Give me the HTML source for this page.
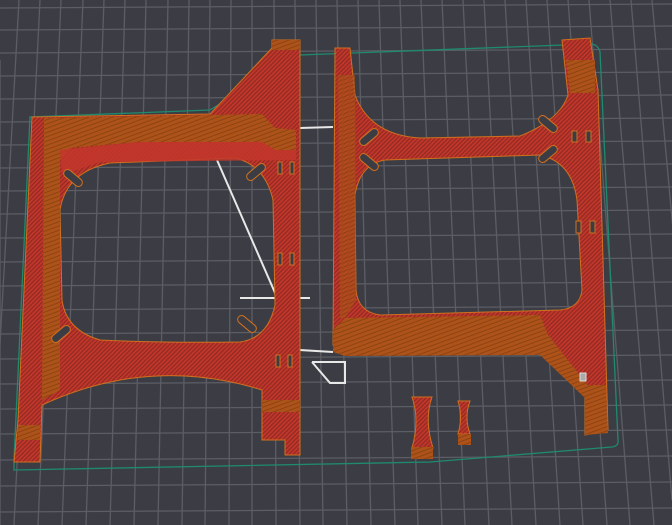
<!DOCTYPE html>
<html><head><style>
html,body{margin:0;padding:0;background:#3b3c43;overflow:hidden}
svg{display:block}
</style></head><body>
<svg width="672" height="525" viewBox="0 0 672 525" xmlns="http://www.w3.org/2000/svg">
<defs>
<pattern id="hatch" width="3" height="3" patternUnits="userSpaceOnUse" patternTransform="rotate(45)">
<rect width="3" height="3" fill="#c3362b"/><rect width="1.2" height="3" fill="#8f2a22"/>
</pattern>
<pattern id="wall" width="4" height="4" patternUnits="userSpaceOnUse" patternTransform="rotate(-20)">
<rect width="4" height="4" fill="#ad5319"/><rect width="4" height="1" fill="#8e4313"/>
</pattern>
</defs>
<rect width="672" height="525" fill="#3c3d44"/>
<g stroke="#5c5d65" stroke-width="1.3">
<line x1="40" y1="0" x2="14" y2="525"/><line x1="83" y1="0" x2="62" y2="525"/>
<line x1="125" y1="0" x2="110" y2="525"/><line x1="168" y1="0" x2="158" y2="525"/>
<line x1="210" y1="0" x2="205" y2="525"/><line x1="252" y1="0" x2="252" y2="525"/>
<line x1="295" y1="0" x2="300" y2="525"/><line x1="337" y1="0" x2="347" y2="525"/>
<line x1="379" y1="0" x2="395" y2="525"/><line x1="421" y1="0" x2="442" y2="525"/>
<line x1="463" y1="0" x2="489" y2="525"/><line x1="505" y1="0" x2="536" y2="525"/>
<line x1="547" y1="0" x2="583" y2="525"/><line x1="589" y1="0" x2="630" y2="525"/>
<line x1="631" y1="0" x2="672" y2="500"/><line x1="0" y1="60" x2="0" y2="525"/>
<line x1="19" y1="0" x2="-10" y2="525"/><line x1="61" y1="0" x2="38" y2="525"/>
<line x1="104" y1="0" x2="86" y2="525"/><line x1="146" y1="0" x2="134" y2="525"/>
<line x1="189" y1="0" x2="182" y2="525"/><line x1="231" y1="0" x2="229" y2="525"/>
<line x1="274" y1="0" x2="276" y2="525"/><line x1="316" y1="0" x2="323" y2="525"/>
<line x1="358" y1="0" x2="371" y2="525"/><line x1="400" y1="0" x2="418" y2="525"/>
<line x1="442" y1="0" x2="465" y2="525"/><line x1="484" y1="0" x2="512" y2="525"/>
<line x1="526" y1="0" x2="560" y2="525"/><line x1="568" y1="0" x2="607" y2="525"/>
<line x1="610" y1="0" x2="654" y2="525"/><line x1="652" y1="0" x2="700" y2="525"/>
<line x1="0" y1="8" x2="672" y2="4"/><line x1="0" y1="30" x2="672" y2="26"/>
<line x1="0" y1="53" x2="672" y2="49"/><line x1="0" y1="76" x2="672" y2="72"/>
<line x1="0" y1="99" x2="672" y2="95"/><line x1="0" y1="122" x2="672" y2="118"/>
<line x1="0" y1="145" x2="672" y2="141"/><line x1="0" y1="168" x2="672" y2="164"/>
<line x1="0" y1="191" x2="672" y2="187"/><line x1="0" y1="214" x2="672" y2="210"/>
<line x1="0" y1="238" x2="672" y2="234"/><line x1="0" y1="262" x2="672" y2="258"/>
<line x1="0" y1="286" x2="672" y2="282"/><line x1="0" y1="310" x2="672" y2="306"/>
<line x1="0" y1="334" x2="672" y2="330"/><line x1="0" y1="359" x2="672" y2="355"/>
<line x1="0" y1="384" x2="672" y2="380"/><line x1="0" y1="409" x2="672" y2="405"/>
<line x1="0" y1="434" x2="672" y2="430"/><line x1="0" y1="460" x2="672" y2="456"/>
<line x1="0" y1="486" x2="672" y2="482"/><line x1="0" y1="512" x2="672" y2="508"/>
</g>
<path d="M14,460 L30,117 L210,110 L300,55 L590,44 Q598,44 600,52 L618,440 Q619,446 612,447 L430,462 L14,470 Z" fill="none" stroke="#1f8a6e" stroke-width="1.3"/>
<g stroke="#e8e8e8" stroke-width="2" fill="none">
<polyline points="300,128 333,127"/><polyline points="217,160 300,350 333,352"/>
<polyline points="240,298 310,298"/><polyline points="312,362 345,362 345,383 330,383 312,362"/>
</g>
<!-- LEFT FRAME -->
<path fill-rule="evenodd" fill="url(#hatch)" stroke="#d0701e" stroke-width="1"
d="M32,117 L210,114 L272,48 L272,40 L300,40 L300,455 L285,455 L285,440 L262,440 L262,390 Q150,355 42,405 L40,462 L14,462 L18,420 Z
M110,163 L235,158 Q265,165 273,200 L275,305 Q268,338 240,342 Q160,343 100,340 Q66,330 62,300 L60,210 Q66,172 110,163 Z"/>
<path fill="url(#wall)" d="M44,118 L262,114 L275,128 L296,130 L296,150 L275,150 L262,142 L140,142 L70,148 L60,160 L60,390 L42,400 L44,130 Z"/>
<path fill="#c3362b" d="M60,150 L140,142 L262,142 L275,150 L296,150 L296,160 L100,162 L62,175 Z" opacity=".85"/>
<path fill="url(#wall)" d="M272,40 L300,40 L300,50 L272,50 Z"/>
<g fill="#3c3d44" stroke="#d0701e">
<rect x="62" y="174" width="22" height="8" rx="4" transform="rotate(40 73 178)"/>
<rect x="245" y="168" width="22" height="8" rx="4" transform="rotate(-40 256 172)"/>
<rect x="50" y="330" width="22" height="8" rx="4" transform="rotate(-40 61 334)"/>
<rect x="236" y="320" width="22" height="8" rx="4" transform="rotate(40 247 324)"/>
<rect x="278" y="162" width="4" height="12"/><rect x="290" y="162" width="4" height="12"/>
<rect x="278" y="253" width="4" height="12"/><rect x="290" y="253" width="4" height="12"/>
<rect x="276" y="355" width="4" height="12"/><rect x="288" y="355" width="4" height="12"/>
</g>
<path fill="url(#wall)" d="M262,400 L300,400 L300,412 L262,412 Z M18,425 L40,425 L40,440 L18,440 Z"/>
<!-- RIGHT FRAME -->
<path fill-rule="evenodd" fill="url(#hatch)" stroke="#d0701e" stroke-width="1"
d="M335,48 L350,48 L355,95 Q370,135 420,138 L520,136 Q560,120 568,95 L562,40 L590,38 L598,90 L608,430 L585,435 L585,395 L540,345 L345,350 L333,345 Z
M385,160 L540,155 Q572,162 577,200 L582,290 Q580,308 560,310 L380,315 Q358,312 356,290 L355,195 Q360,164 385,160 Z"/>
<path fill="url(#wall)" d="M333,330 L345,318 L540,315 L548,335 L590,388 L590,398 L585,398 L540,355 L345,356 L333,352 Z"/>
<path fill="url(#wall)" d="M585,385 L606,385 L608,433 L585,435 Z"/>
<path fill="url(#wall)" d="M566,60 L595,60 L595,93 L570,93 Z"/>
<path fill="url(#wall)" d="M338,75 L355,75 L356,300 L345,318 L340,318 Z" opacity=".7"/>
<g fill="#3c3d44" stroke="#d0701e">
<rect x="358" y="133" width="22" height="8" rx="4" transform="rotate(-40 369 137)"/>
<rect x="358" y="158" width="22" height="8" rx="4" transform="rotate(40 369 162)"/>
<rect x="537" y="120" width="22" height="8" rx="4" transform="rotate(40 548 124)"/>
<rect x="537" y="150" width="22" height="8" rx="4" transform="rotate(-40 548 154)"/>
<rect x="572" y="131" width="5" height="11"/><rect x="586" y="131" width="5" height="11"/>
<rect x="576" y="221" width="5" height="12"/><rect x="590" y="221" width="5" height="12"/>
<rect x="580" y="373" width="6" height="8" fill="#aaa" stroke="#ddd"/>
</g>
<path fill="url(#hatch)" stroke="#d0701e" d="M412,397 L432,397 Q424,420 433,448 L412,448 Q420,420 412,397 Z"/>
<path fill="url(#wall)" d="M411,447 L433,447 L433,459 L411,459 Z"/>
<path fill="url(#hatch)" stroke="#d0701e" d="M458,401 L470,401 Q464,417 470,434 L458,434 Q463,417 458,401 Z"/>
<path fill="url(#wall)" d="M458,434 L471,434 L471,445 L458,445 Z"/>
</svg>
</body></html>
